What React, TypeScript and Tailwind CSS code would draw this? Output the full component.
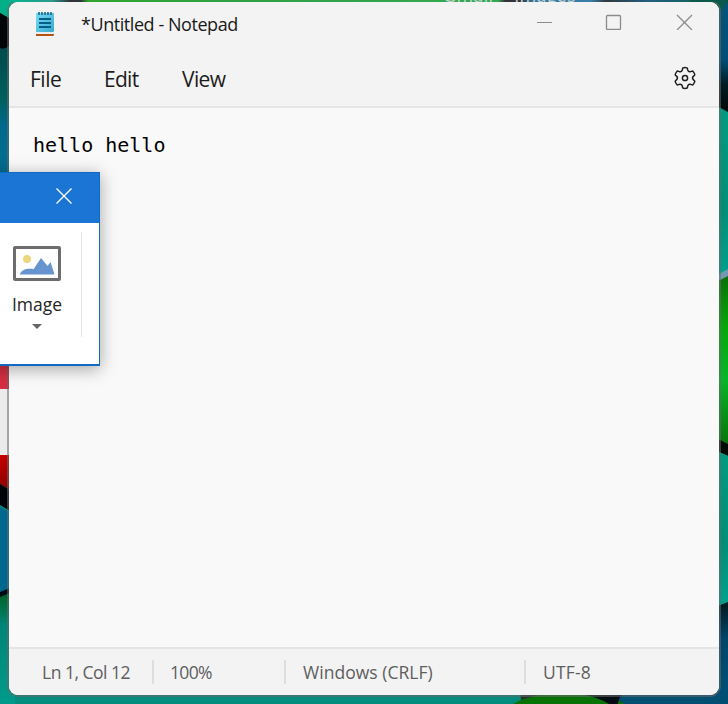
import React from 'react';

function Wallpaper() {
  return (
    <svg className="absolute inset-0 h-full w-full" viewBox="0 0 728 704">
      <defs>
        <linearGradient id="leftBlue" x1="0" y1="0" x2="0" y2="1">
          <stop offset="0" stopColor="#053c4b" />
          <stop offset="0.35" stopColor="#00504f" />
          <stop offset="0.55" stopColor="#00605f" />
          <stop offset="0.7" stopColor="#00698d" />
          <stop offset="1" stopColor="#00708f" />
        </linearGradient>
        <linearGradient id="topBar" x1="0" y1="0" x2="1" y2="0">
          <stop offset="0" stopColor="#00b58d" />
          <stop offset="0.06" stopColor="#2c9a8c" />
          <stop offset="0.085" stopColor="#30343a" />
          <stop offset="0.1" stopColor="#30343a" />
          <stop offset="0.11" stopColor="#30a52c" />
          <stop offset="0.3" stopColor="#2fa043" />
          <stop offset="0.68" stopColor="#32a952" />
          <stop offset="0.69" stopColor="#34323a" />
          <stop offset="0.71" stopColor="#34323a" />
          <stop offset="0.73" stopColor="#3377a5" />
          <stop offset="0.81" stopColor="#397da8" />
          <stop offset="0.83" stopColor="#303940" />
          <stop offset="0.89" stopColor="#235e82" />
          <stop offset="0.95" stopColor="#126460" />
          <stop offset="1" stopColor="#075546" />
        </linearGradient>
        <linearGradient id="rightBlue" x1="0" y1="0" x2="0" y2="1">
          <stop offset="0" stopColor="#075478" />
          <stop offset="0.52" stopColor="#004e78" />
          <stop offset="0.75" stopColor="#001c24" />
          <stop offset="1" stopColor="#000808" />
        </linearGradient>
        <linearGradient id="rightGreen" x1="0" y1="0" x2="0" y2="1">
          <stop offset="0" stopColor="#087008" />
          <stop offset="0.3" stopColor="#06a80b" />
          <stop offset="0.6" stopColor="#06b62a" />
          <stop offset="1" stopColor="#087009" />
        </linearGradient>
        <linearGradient id="rightTeal" x1="0" y1="0" x2="0" y2="1">
          <stop offset="0" stopColor="#009b83" />
          <stop offset="0.6" stopColor="#008f78" />
          <stop offset="1" stopColor="#00a390" />
        </linearGradient>
        <linearGradient id="leftRed" x1="0" y1="0" x2="0" y2="1">
          <stop offset="0" stopColor="#c40000" />
          <stop offset="1" stopColor="#860000" />
        </linearGradient>
        <linearGradient id="leftTeal" x1="0" y1="0" x2="0" y2="1">
          <stop offset="0" stopColor="#005f1e" />
          <stop offset="0.3" stopColor="#008577" />
          <stop offset="1" stopColor="#009b8a" />
        </linearGradient>
        <linearGradient id="deepBlue" x1="0" y1="0" x2="0" y2="1">
          <stop offset="0" stopColor="#001a1e" />
          <stop offset="0.35" stopColor="#00456a" />
          <stop offset="1" stopColor="#005378" />
        </linearGradient>
      </defs>
      <rect width="728" height="704" fill="#008d7e" />
      <rect width="20" height="180" fill="url(#leftBlue)" />
      <path d="M0 0H20V26L0 13Z" fill="#02af87" />
      <path d="M0 13L9 18V46Q4 50 0 48Z" fill="#020508" />
      <rect x="9" width="719" height="9" fill="url(#topBar)" />
      <path d="M706 3H728V112L706 100Z" fill="url(#rightBlue)" />
      <path d="M690 0H727Q724 9 718 12H690Z" fill="#0b594a" />
      <path d="M710 103L728 113V277L710 283Z" fill="url(#rightTeal)" />
      <path d="M710 279L728 269V278L710 288Z" fill="#719ab1" />
      <path d="M710 285L728 276V448L710 438Z" fill="url(#rightGreen)" />
      <path d="M710 435L728 444V456L710 448Z" fill="#000b08" />
      <path d="M710 448L728 456V604L710 610Z" fill="url(#rightTeal)" />
      <path d="M710 609L728 602V704H710Z" fill="url(#deepBlue)" />
      <rect y="365" width="15" height="24" fill="#d62e42" />
      <rect y="389" width="15" height="66" fill="#ebebeb" />
      <path d="M0 455H15V493L0 484Z" fill="url(#leftRed)" />
      <path d="M0 484L15 493V514L0 505Z" fill="#000308" />
      <path d="M0 507L15 515V588L0 592Z" fill="#00688e" />
      <path d="M0 592L15 586V593L0 598Z" fill="#000a12" />
      <path d="M0 597L15 591V704H0Z" fill="url(#leftTeal)" />
      <path d="M521 690H728V704H521Z" fill="#004e72" />
      <path d="M519 690H596L625 704H513L521 700Z" fill="#087304" />
      <path d="M580 690H626Q618 698 618 704H609Q598 697 580 694Z" fill="#020c12" />
      <path d="M521 690H555L521 700Z" fill="#25322f" />
    </svg>
  );
}

function NotepadIcon() {
  return (
    <svg className="h-6 w-[18px]" viewBox="0 0 18 24">
      <defs>
        <linearGradient id="pad" x1="0" y1="0" x2="1" y2="1">
          <stop offset="0" stopColor="#7bdcf5" />
          <stop offset="1" stopColor="#37a9cf" />
        </linearGradient>
      </defs>
      <path d="M0 20H18V22.5Q18 24 16.5 24H0Z" fill="#b45311" />
      <path d="M0 18H18V22H0Z" fill="#e9edef" />
      <path d="M0 1H18V18.5Q18 20 16.5 20H0Z" fill="url(#pad)" />
      <path d="M3 0V3M6 0V3M9 0V3M12 0V3M15 0V3" stroke="#12617f" strokeWidth="1.5" />
      <path d="M3 7H15M3 11H15M3 15H15" stroke="#075f87" strokeWidth="1.8" />
    </svg>
  );
}

// Six rounded teeth, each a copy of the top one turned by 60 degrees.
const gearOutline = (() => {
  const turn = (x: number, y: number, step: number) => {
    const a = (step * Math.PI) / 3;
    return `${(x * Math.cos(a) - y * Math.sin(a)).toFixed(2)} ${(x * Math.sin(a) + y * Math.cos(a)).toFixed(2)}`;
  };
  let d = '';
  for (let i = 0; i < 6; i++) {
    d += `${i === 0 ? 'M' : 'L'}${turn(-2.7, -8, i)}L${turn(-2.4, -9.6, i)}Q${turn(-2.2, -10.3, i)} ${turn(-1.4, -10.3, i)}`;
    d += `Q${turn(0, -10.5, i)} ${turn(1.4, -10.3, i)}Q${turn(2.2, -10.3, i)} ${turn(2.4, -9.6, i)}L${turn(2.7, -8, i)}`;
    d += `Q${turn(3.4, -5.9, i)} ${turn(-2.7, -8, i + 1)}`;
  }
  return d + 'Z';
})();

function Gear() {
  return (
    <svg className="size-6" viewBox="-12 -12 24 24" fill="none" stroke="#1d1d1d" strokeWidth="1.5" strokeLinejoin="round">
      <path d={gearOutline} />
      <circle r="2.6" />
    </svg>
  );
}

function Separator() {
  return <div className="h-6 w-0.5 shrink-0 bg-[#dedede]" />;
}

export default function App() {
  return (
    <div className="relative h-[704px] w-[728px] overflow-hidden font-['Open_Sans','Noto_Sans',sans-serif]">
      <Wallpaper />
      <div className="absolute top-[-15px] left-[443px] flex gap-[21px] text-[18px] leading-5 text-[#c4d3cf]">
        <span className="tracking-[0.3px]">Gmail</span>
        <span className="tracking-[0.2px]">Images</span>
      </div>
      <div className="absolute top-[2px] left-[9px] flex h-[693px] w-[710px] flex-col overflow-clip rounded-[9px] bg-[#f9f9f9] shadow-[0_0_0_2px_rgba(105,105,105,0.55)] [clip-path:inset(0_-2px_-2px_-2px)]">
        <header className="h-[106px] shrink-0 border-b-2 border-[#e5e5e5] bg-[#f3f3f3]">
          <div className="flex h-[46px] items-start pl-[27px]">
            <div className="mt-2.5"><NotepadIcon /></div>
            <h1 className="mt-[10px] ml-[27px] text-[18px] leading-6 tracking-[-0.44px] text-[#191919]">*Untitled - Notepad</h1>
            <svg className="mt-2.5 mr-[25px] ml-auto h-[18px] w-[158px]" viewBox="0 0 158 18" fill="none" stroke="#8b8b8b" strokeWidth="1.3">
              <path d="M1 10.5H16" strokeWidth="1" />
              <rect x="70.5" y="3.5" width="14" height="14" rx="1" />
              <path d="M141 3L156 18M156 3L141 18" />
            </svg>
          </div>
          <nav className="flex h-[60px] items-center pr-[22px] pl-[21px] text-[21px] leading-7 text-[#1c1c1c]">
            <span className="mt-[2px] w-[74px] tracking-[-0.5px]">File</span>
            <span className="mt-[2px] w-[78px] tracking-[-0.7px]">Edit</span>
            <span className="mt-[2px] tracking-[-0.6px]">View</span>
            <span className="ml-auto"><Gear /></span>
          </nav>
        </header>
        <main className="min-h-0 flex-1 pt-[23px] pl-6">
          <p className="font-['DejaVu_Sans_Mono',monospace] text-[20px] leading-7 text-black">hello hello</p>
        </main>
        <footer className="flex h-12 shrink-0 items-center border-t-2 border-[#e5e5e5] bg-[#f3f3f3] pl-[33px] text-[17.5px] text-[#5e5e5e]">
          <span className="mt-px w-[110px] whitespace-nowrap tracking-[-0.5px]">Ln 1, Col 12</span>
          <Separator />
          <span className="mt-px w-[130px] pl-4 tracking-[-0.65px]">100%</span>
          <Separator />
          <span className="mt-px w-[238px] pl-[17px] tracking-[0.03px]">Windows (CRLF)</span>
          <Separator />
          <span className="mt-px pl-[17px] tracking-[0.2px]">UTF-8</span>
        </footer>
      </div>

      <section className="absolute top-[172px] left-[-20px] h-[194px] w-[120px] border border-b-2 border-[#1269c4] bg-white shadow-[0_3px_16px_rgba(0,0,0,0.35)]">
        <div className="flex h-[50px] items-start justify-end bg-[#1a75d4] pt-[14px] pr-[25px]">
          <svg className="size-[18px]" viewBox="0 0 18 18" stroke="#ffffff" strokeWidth="1.4">
            <path d="M0.5 1.5L15.5 16.5M15.5 1.5L0.5 16.5" />
          </svg>
        </div>
        <div className="mt-[9px] ml-[19px] flex h-[105px] w-[82px] flex-col items-center border-r border-[#e6e6e6] pt-[14px] pr-[7px]">
          <svg className="h-[35px] w-12 shrink-0" viewBox="0 0 48 35">
            <rect x="1.5" y="1.5" width="45" height="32" rx="0.5" fill="#fff" stroke="#6d6d6d" strokeWidth="3" />
            <circle cx="14" cy="13" r="4" fill="#ecd77a" />
            <path d="M7 28.5C8 24 14 22 20.5 23.2L28 12L34.5 20L37.5 16L41.5 28.5Z" fill="#6594ce" />
          </svg>
          <span className="mt-[11px] text-[17.5px] leading-6 text-[#252525]">Image</span>
          <svg className="mt-[8px] h-[5px] w-[10px] shrink-0" viewBox="0 0 10 5"><path d="M0 0H10L5 5Z" fill="#666" /></svg>
        </div>
      </section>
    </div>
  );
}
